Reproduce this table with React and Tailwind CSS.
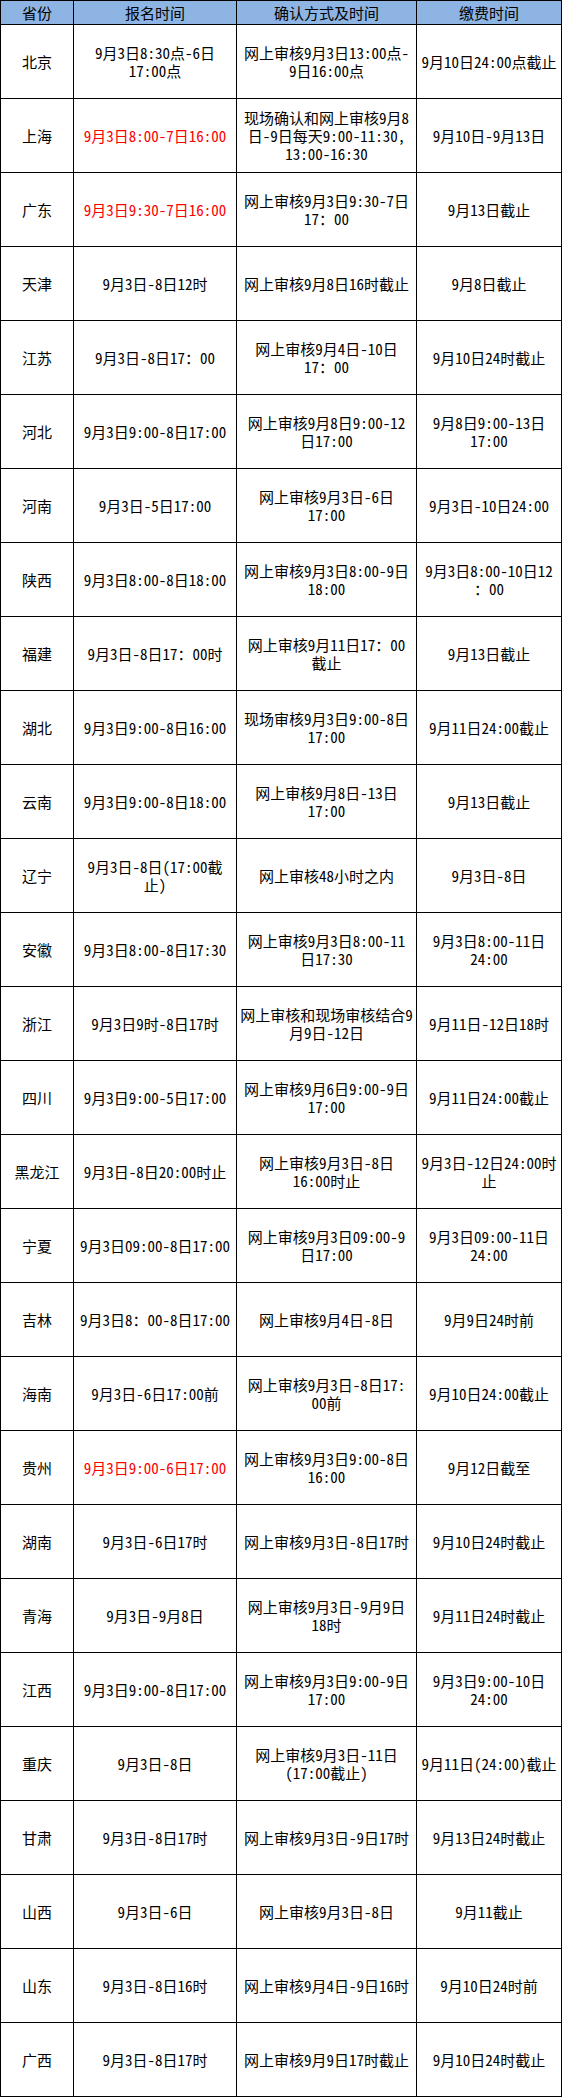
const rows = [
  ["北京", ["9月3日8:30点-6日", "17:00点"], ["网上审核9月3日13:00点-", "9日16:00点"], ["9月10日24:00点截止"]],
  ["上海", ["9月3日8:00-7日16:00"], ["现场确认和网上审核9月8", "日-9日每天9:00-11:30，", "13:00-16:30"], ["9月10日-9月13日"], true],
  ["广东", ["9月3日9:30-7日16:00"], ["网上审核9月3日9:30-7日", "17：00"], ["9月13日截止"], true],
  ["天津", ["9月3日-8日12时"], ["网上审核9月8日16时截止"], ["9月8日截止"]],
  ["江苏", ["9月3日-8日17：00"], ["网上审核9月4日-10日", "17：00"], ["9月10日24时截止"]],
  ["河北", ["9月3日9:00-8日17:00"], ["网上审核9月8日9:00-12", "日17:00"], ["9月8日9:00-13日", "17:00"]],
  ["河南", ["9月3日-5日17:00"], ["网上审核9月3日-6日", "17:00"], ["9月3日-10日24:00"]],
  ["陕西", ["9月3日8:00-8日18:00"], ["网上审核9月3日8:00-9日", "18:00"], ["9月3日8:00-10日12", "：00"]],
  ["福建", ["9月3日-8日17：00时"], ["网上审核9月11日17：00", "截止"], ["9月13日截止"]],
  ["湖北", ["9月3日9:00-8日16:00"], ["现场审核9月3日9:00-8日", "17:00"], ["9月11日24:00截止"]],
  ["云南", ["9月3日9:00-8日18:00"], ["网上审核9月8日-13日", "17:00"], ["9月13日截止"]],
  ["辽宁", ["9月3日-8日(17:00截", "止)"], ["网上审核48小时之内"], ["9月3日-8日"]],
  ["安徽", ["9月3日8:00-8日17:30"], ["网上审核9月3日8:00-11", "日17:30"], ["9月3日8:00-11日", "24:00"]],
  ["浙江", ["9月3日9时-8日17时"], ["网上审核和现场审核结合9", "月9日-12日"], ["9月11日-12日18时"]],
  ["四川", ["9月3日9:00-5日17:00"], ["网上审核9月6日9:00-9日", "17:00"], ["9月11日24:00截止"]],
  ["黑龙江", ["9月3日-8日20:00时止"], ["网上审核9月3日-8日", "16:00时止"], ["9月3日-12日24:00时", "止"]],
  ["宁夏", ["9月3日09:00-8日17:00"], ["网上审核9月3日09:00-9", "日17:00"], ["9月3日09:00-11日", "24:00"]],
  ["吉林", ["9月3日8：00-8日17:00"], ["网上审核9月4日-8日"], ["9月9日24时前"]],
  ["海南", ["9月3日-6日17:00前"], ["网上审核9月3日-8日17:", "00前"], ["9月10日24:00截止"]],
  ["贵州", ["9月3日9:00-6日17:00"], ["网上审核9月3日9:00-8日", "16:00"], ["9月12日截至"], true],
  ["湖南", ["9月3日-6日17时"], ["网上审核9月3日-8日17时"], ["9月10日24时截止"]],
  ["青海", ["9月3日-9月8日"], ["网上审核9月3日-9月9日", "18时"], ["9月11日24时截止"]],
  ["江西", ["9月3日9:00-8日17:00"], ["网上审核9月3日9:00-9日", "17:00"], ["9月3日9:00-10日", "24:00"]],
  ["重庆", ["9月3日-8日"], ["网上审核9月3日-11日", "(17:00截止)"], ["9月11日(24:00)截止"]],
  ["甘肃", ["9月3日-8日17时"], ["网上审核9月3日-9日17时"], ["9月13日24时截止"]],
  ["山西", ["9月3日-6日"], ["网上审核9月3日-8日"], ["9月11截止"]],
  ["山东", ["9月3日-8日16时"], ["网上审核9月4日-9日16时"], ["9月10日24时前"]],
  ["广西", ["9月3日-8日17时"], ["网上审核9月9日17时截止"], ["9月10日24时截止"]],
];

function Lines({ lines }) {
  return lines.map((l, i) => (
    <div key={i} className="whitespace-nowrap">
      {l}
    </div>
  ));
}

export default function App() {
  return (
    <div className="w-[562px] bg-white font-['Noto_Sans_CJK_SC',sans-serif] text-[15px] leading-[18px] text-black [font-feature-settings:'hwid']">
      <table className="w-[561px] table-fixed border-collapse">
        <colgroup>
          <col className="w-[73px]" />
          <col className="w-[163px]" />
          <col className="w-[180px]" />
          <col className="w-[145px]" />
        </colgroup>
        <thead>
          <tr className="h-[24px] bg-[#8db4e2]">
            <th className="border border-black p-0 text-center font-normal">省份</th>
            <th className="border border-black p-0 text-center font-normal">报名时间</th>
            <th className="border border-black p-0 text-center font-normal">确认方式及时间</th>
            <th className="border border-black p-0 text-center font-normal">缴费时间</th>
          </tr>
        </thead>
        <tbody>
          {rows.map(([prov, reg, confirm, fee, red]) => (
            <tr key={prov} className="h-[74px]">
              <td className="border border-black p-0 text-center align-middle">{prov}</td>
              <td className={`border border-black p-0 text-center align-middle ${red ? "text-[#ff0000]" : ""}`}>
                <Lines lines={reg} />
              </td>
              <td className="border border-black p-0 text-center align-middle">
                <Lines lines={confirm} />
              </td>
              <td className="border border-black p-0 text-center align-middle">
                <Lines lines={fee} />
              </td>
            </tr>
          ))}
        </tbody>
      </table>
    </div>
  );
}
